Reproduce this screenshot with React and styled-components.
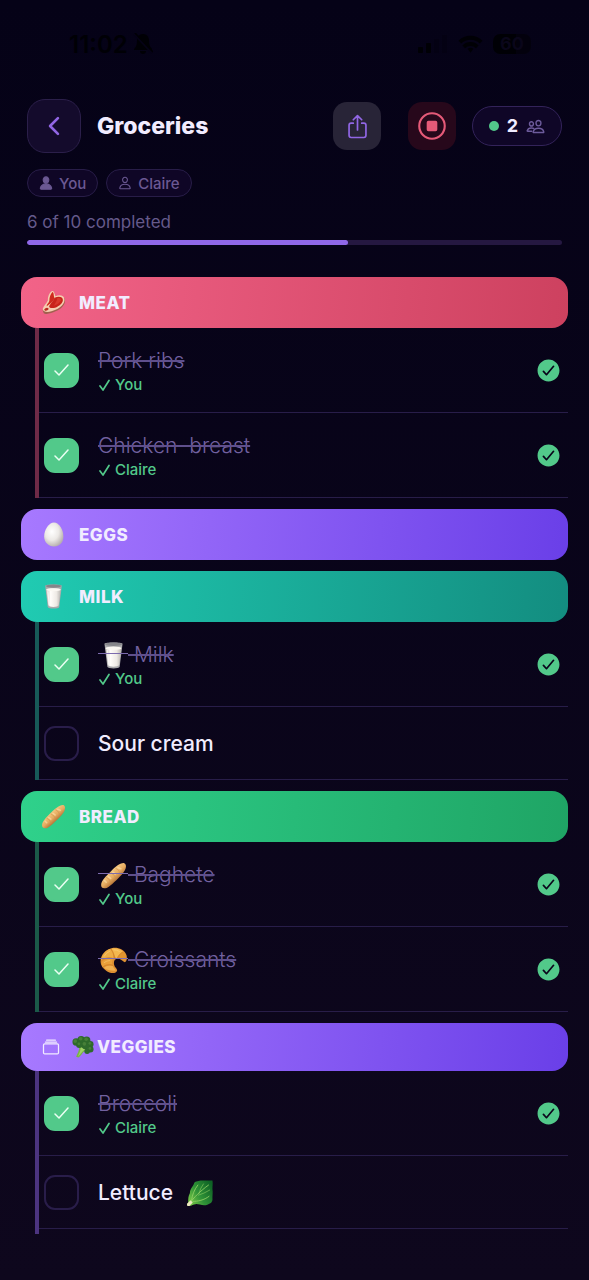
import React, { useId, useState } from "react";
import styled, { createGlobalStyle } from "styled-components";
import {
  IoAlbumsOutline,
  IoCheckmarkCircle,
  IoChevronBack,
  IoPeopleOutline,
  IoPerson,
  IoPersonOutline,
  IoShareOutline,
  IoStopCircleOutline,
} from "react-icons/io5";

const GlobalStyle = createGlobalStyle`
  *, *::before, *::after { box-sizing: border-box; }
  html { background: #0d071c; }
  body {
    margin: 0;
    min-height: 100vh;
    background: linear-gradient(#050217, #0e071d);
    color: #f1ecff;
    font-family: Inter, "Noto Sans", "DejaVu Sans", sans-serif;
  }
`;

/* ---------- emoji drawings ---------- */

function Meat() {
  return (
    <svg viewBox="0 0 48 48" role="img" aria-label="meat">
      <path d="M3 38C4 32 10 28 13 21C14 13 16 6 21 3C26 2 26 8 28 13C35 9 46 11 46 20C47 28 38 37 28 41C20 45 9 48 5 44Z" fill="#a2604f" />
      <path d="M3 37C4 31 10 27 13 20C13 12 16 5 21 2C26 1 26 8 28 12C35 8 45 10 45 18C46 26 37 34 28 38C19 42 6 45 3 37Z" fill="#f6cdb0" />
      <path d="M16 21C16 13 19 7 22 4C25 4 24 12 26 16C24 21 20 25 11 31C10 28 15 25 16 21Z" fill="#cf2a1e" />
      <path d="M26 15C34 11 42 13 42 19C42 25 35 31 27 34C20 36 14 34 16 30C19 25 24 21 26 15Z" fill="#c9241b" />
      <path d="M31 16C36 14 39 17 38 20C36 25 30 28 25 30C27 25 31 22 31 16Z" fill="#d8382c" />
      <path d="M6 38C8 34 12 33 14 35C16 37 12 40 8 40Z" fill="#b92a22" />
    </svg>
  );
}

function Egg() {
  return (
    <svg viewBox="0 0 48 48" role="img" aria-label="egg">
      <defs>
        <radialGradient id="egg" cx="0.4" cy="0.38" r="0.65">
          <stop offset="0" stopColor="#ffffff" />
          <stop offset="0.55" stopColor="#ece9e6" />
          <stop offset="1" stopColor="#b7b0af" />
        </radialGradient>
      </defs>
      <path d="M25 1C35 1 43 15 43 28C43 39 36 47 25 47C14 47 6 39 6 28C6 15 15 1 25 1Z" fill="url(#egg)" />
    </svg>
  );
}

function Milk() {
  return (
    <svg viewBox="0 0 48 48" role="img" aria-label="glass of milk">
      <defs>
        <linearGradient id="milk">
          <stop offset="0" stopColor="#c9c4bf" />
          <stop offset="0.3" stopColor="#fffdfa" />
          <stop offset="0.7" stopColor="#eeeae5" />
          <stop offset="1" stopColor="#b9b4b0" />
        </linearGradient>
      </defs>
      <path d="M8 3C8 0 40 0 40 3L35 44C34 48 14 48 13 44Z" fill="#a9a9ab" />
      <path d="M10 11C15 8 33 8 38 11L34 41C33 45 15 45 14 41Z" fill="url(#milk)" />
      <ellipse cx="24" cy="4" rx="15" ry="3" fill="#85858a" />
      <ellipse cx="24" cy="11" rx="14" ry="3" fill="#faf7f2" />
      <path d="M13 14L16 40" stroke="#fff" strokeWidth="2" opacity="0.7" />
    </svg>
  );
}

function Baguette() {
  return (
    <svg viewBox="0 0 48 48" role="img" aria-label="baguette">
      <defs>
        <linearGradient id="crust" x1="0.3" y1="0.3" x2="0.7" y2="0.75">
          <stop offset="0" stopColor="#f9cf88" />
          <stop offset="0.5" stopColor="#e6ab60" />
          <stop offset="1" stopColor="#9c5722" />
        </linearGradient>
      </defs>
      <path d="M2 41C2 33 12 24 20 16C27 9 36 1 43 2C49 5 46 15 39 22C31 30 20 42 12 46C6 48 2 46 2 41Z" fill="url(#crust)" />
      <g stroke="#cd8f4a" strokeWidth="1" strokeLinecap="round" fill="none">
        <path d="M11 27Q17 29 19 36" />
        <path d="M19 19Q25 21 28 28" />
        <path d="M28 11Q34 13 36 20" />
      </g>
      <g stroke="#fde3b0" strokeWidth="3" strokeLinecap="round" fill="none" opacity="0.6">
        <path d="M8 33L11 36" />
        <path d="M15 26L19 29" />
        <path d="M23 18L27 21" />
        <path d="M32 10L37 12" />
      </g>
    </svg>
  );
}

function Croissant() {
  return (
    <svg viewBox="0 0 48 48" role="img" aria-label="croissant">
      <path d="M1 26C1 14 9 4 21 2C31 0 43 4 47 14C49 21 47 26 44 27C40 26 38 21 32 21C26 21 24 25 25 31C26 37 32 39 30 43C27 48 17 47 11 42C5 38 1 32 1 26Z" fill="#dd9032" />
      <path d="M2 24C3 14 10 6 18 3C22 8 24 14 24 20C18 18 8 18 2 24Z" fill="#efae45" />
      <path d="M20 3C29 1 37 4 41 8C36 11 32 15 30 20C26 20 26 12 20 3Z" fill="#f4b84f" />
      <path d="M42 8C46 13 47 20 44 25C41 23 38 20 33 19C35 14 38 11 42 8Z" fill="#e0942f" />
      <path d="M3 27C9 21 17 20 23 22C21 25 21 28 22 31C16 29 9 31 5 35C3 32 3 30 3 27Z" fill="#e9a03a" />
      <path d="M7 37C12 33 18 32 23 34C24 37 27 39 28 42C22 43 13 42 7 37Z" fill="#efb050" />
      <g stroke="#ffdf93" strokeWidth="1.5" fill="none" opacity="0.5">
        <path d="M7 17Q11 10 18 7" />
        <path d="M24 5Q30 5 35 8" />
        <path d="M7 28Q12 24 18 24" />
      </g>
      <g stroke="#cd7f27" strokeWidth="1" fill="none">
        <path d="M2 25C9 18 18 18 24 21" />
        <path d="M19 3C25 10 25 15 26 20" />
        <path d="M42 8C36 11 33 15 31 20" />
        <path d="M5 36C10 31 17 31 23 33" />
      </g>
    </svg>
  );
}

function Broccoli() {
  return (
    <svg viewBox="0 0 48 48" role="img" aria-label="broccoli">
      <path d="M16 23L25 21L37 31C31 31 27 32 24 36C21 40 18 45 14 47L9 45C12 38 16 32 16 23Z" fill="#78b544" />
      <path d="M19 24L30 29C24 31 20 38 13 45C17 36 19 31 19 24Z" fill="#a3d167" />
      <g fill="#2e6a2b">
        <circle cx="9" cy="13" r="8" />
        <circle cx="20" cy="8" r="8" />
        <circle cx="32" cy="9" r="8" />
        <circle cx="40" cy="18" r="7" />
        <circle cx="40" cy="29" r="7" />
        <circle cx="29" cy="20" r="9" />
        <circle cx="16" cy="19" r="7" />
        <circle cx="33" cy="33" r="6" />
      </g>
      <g fill="#467f38">
        <circle cx="7" cy="11" r="4" />
        <circle cx="19" cy="6" r="4" />
        <circle cx="31" cy="7" r="4" />
        <circle cx="39" cy="16" r="3" />
        <circle cx="27" cy="17" r="4" />
        <circle cx="15" cy="17" r="3" />
        <circle cx="39" cy="27" r="3" />
      </g>
    </svg>
  );
}

function Lettuce() {
  return (
    <svg viewBox="0 0 48 48" role="img" aria-label="leafy green">
      <defs>
        <linearGradient id="leaf" x1="0" y1="0.8" x2="1" y2="0.2">
          <stop offset="0" stopColor="#7ccb48" />
          <stop offset="0.45" stopColor="#2f9237" />
          <stop offset="1" stopColor="#0e6225" />
        </linearGradient>
      </defs>
      <path d="M4 40C4 33 4 28 7 23C7 16 12 12 14 7C15 2 21 3 26 1L47 1C48 7 47 10 47 16C48 23 47 26 47 32C48 40 43 42 38 44C30 47 22 42 17 43C13 43 10 46 6 46C1 47 1 42 4 40Z" fill="url(#leaf)" />
      <g stroke="#94d166" strokeWidth="1.5" strokeLinecap="round" fill="none">
        <path d="M6 42C14 31 25 20 40 9" />
        <path d="M10 36C11 26 15 17 21 9" />
        <path d="M12 38C21 38 32 36 41 29" />
        <path d="M23 24Q25 15 31 7" strokeWidth="1" />
        <path d="M22 27Q32 24 42 18" strokeWidth="1" />
      </g>
      <path d="M2 42L8 36L12 40L6 46C3 47 1 45 2 42Z" fill="#f0e9c3" />
    </svg>
  );
}

const EMOJI = {
  meat: Meat,
  egg: Egg,
  milk: Milk,
  baguette: Baguette,
  croissant: Croissant,
  broccoli: Broccoli,
  lettuce: Lettuce,
};

/* ---------- status bar ---------- */

const StatusBar = styled.div`
  display: flex;
  justify-content: space-between;
  align-items: center;
  height: 40px;
  margin-top: 24px;
  padding: 0 58px 0 69px;
  color: #000005;
`;

const Clock = styled.span`
  display: flex;
  align-items: center;
  gap: 5px;
  font-size: 24px;
  font-weight: 600;
`;

const StatusIcons = styled.span`
  display: flex;
  align-items: center;
  gap: 10px;
`;

const Battery = styled.span`
  width: 38px;
  height: 20px;
  border-radius: 7px;
  background: linear-gradient(90deg, #000005 60%, #03010d 60%);
  color: #0a061a;
  font-size: 18px;
  font-weight: 700;
  line-height: 20px;
  text-align: center;
`;

function BellOff() {
  return (
    <svg width="20" height="22" viewBox="0 0 20 22" fill="currentColor" aria-hidden="true">
      <path d="M10 1C14 1 16 4 16 8C16 12 17 14 19 16V17H1V16C3 14 4 12 4 8C4 4 6 1 10 1Z" />
      <path d="M7 18H13C13 22 7 22 7 18Z" />
      <path d="M1 1L19 20" stroke="#050216" strokeWidth="2" />
      <path d="M2 0L20 19" stroke="currentColor" strokeWidth="1.5" />
    </svg>
  );
}

function Signal() {
  return (
    <svg width="30" height="20" viewBox="0 0 30 20" fill="currentColor" aria-hidden="true">
      <rect x="0" y="13" width="5" height="6" rx="1" />
      <rect x="8" y="9" width="5" height="10" rx="1" />
      <rect x="16" y="5" width="5" height="14" rx="1" opacity="0.2" />
      <rect x="24" y="1" width="5" height="18" rx="1" opacity="0.2" />
    </svg>
  );
}

function Wifi() {
  return (
    <svg width="25" height="19" viewBox="0 0 26 19" fill="none" stroke="currentColor" strokeWidth="4" aria-hidden="true">
      <path d="M2 7C8 1 18 1 24 7" />
      <path d="M6 12C10 8 16 8 20 12" />
      <path d="M10 14Q13 12 16 14L13 18Z" fill="currentColor" stroke="none" />
    </svg>
  );
}

/* ---------- header ---------- */

const Header = styled.header`
  padding: 35px 27px 0;
`;

const TitleBar = styled.div`
  display: flex;
  align-items: center;
`;

const BackButton = styled.button`
  display: grid;
  place-items: center;
  width: 54px;
  height: 54px;
  padding: 0;
  border: 1px solid #2b1f4a;
  border-radius: 18px;
  background: #140b2c;
  color: #9166e4;
`;

const Title = styled.h1`
  flex: 1;
  margin: 0 0 0 16px;
  font-size: 23px;
  font-weight: 800;
  line-height: 32px;
`;

const ToolButton = styled.button`
  display: grid;
  place-items: center;
  width: 48px;
  height: 48px;
  margin-right: ${({ $danger }) => ($danger ? 16 : 27)}px;
  padding: 0;
  border: 0;
  border-radius: 14px;
  background: ${({ $danger }) => ($danger ? "#27081b" : "#282437")};
  color: ${({ $danger }) => ($danger ? "#e55a78" : "#9166e4")};
`;

const MembersButton = styled.button`
  display: flex;
  align-items: center;
  justify-content: center;
  gap: 8px;
  width: 90px;
  height: 40px;
  padding: 0;
  border: 1px solid #33235a;
  border-radius: 20px;
  background: #0f0627;
  color: #f1ecff;
  font: 700 18px/24px Inter, "Noto Sans", sans-serif;

  svg { color: #6d5b9c; }
  path { stroke-width: 38px; }
`;

const OnlineDot = styled.span`
  width: 10px;
  height: 10px;
  border-radius: 50%;
  background: #52c98a;
`;

const Chips = styled.ul`
  display: flex;
  gap: 8px;
  margin: 16px 0 0;
  padding: 0;
  list-style: none;
`;

const Chip = styled.li`
  display: flex;
  align-items: center;
  gap: 6px;
  height: 28px;
  padding: 0 11px;
  border: 1px solid #281d48;
  border-radius: 14px;
  background: #0f0626;
  color: #6b5993;
  font-size: 15px;
  font-weight: 500;

  path { stroke-width: 38px; }
`;

const ProgressLabel = styled.label`
  display: block;
  margin-top: 13px;
  color: #655a8b;
  font-size: 17px;
  line-height: 24px;
`;

const ProgressBar = styled.progress`
  display: block;
  appearance: none;
  width: 100%;
  height: 5px;
  margin-top: 6px;
  border: 0;
  border-radius: 3px;
  overflow: hidden;
  background: #251841;

  &::-webkit-progress-bar { background: #251841; }
  &::-webkit-progress-value { border-radius: 3px; background: #9068e8; }
  &::-moz-progress-bar { border-radius: 3px; background: #9068e8; }
`;

/* ---------- list ---------- */

const List = styled.main`
  display: flex;
  flex-direction: column;
  gap: 11px;
  padding: 32px 21px 46px;
`;

const GroupHeader = styled.h2`
  display: flex;
  align-items: center;
  height: ${({ $compact }) => ($compact ? 48 : 51)}px;
  margin: 0;
  padding: 0 20px;
  border-radius: 16px;
  background: linear-gradient(95deg, ${({ $from }) => $from}, ${({ $to }) => $to});
  font-size: 17px;
  font-weight: 800;
  line-height: 24px;
  letter-spacing: 0.5px;
`;

const GroupEmoji = styled.span`
  display: grid;
  width: ${({ $inline }) => ($inline ? 22 : 25)}px;
  margin-left: ${({ $inline }) => ($inline ? 11 : 0)}px;
  margin-right: ${({ $inline }) => ($inline ? 3 : 13)}px;
`;

const GroupBody = styled.ul`
  margin: 0 0 0 14px;
  padding: 0 0 ${({ $last }) => ($last ? 5 : 0)}px;
  border-left: 4px solid ${({ $color }) => $color};
  list-style: none;
`;

const Row = styled.li`
  display: flex;
  align-items: center;
  min-height: ${({ $done }) => ($done ? 85 : 73)}px;
  padding: 0 6px 0 5px;
  border-bottom: 1px solid #281d49;
`;

const CheckBox = styled.span`
  display: grid;
  place-items: center;
  flex: none;
  margin-right: 19px;

  > * { grid-area: 1 / 1; }
  svg { pointer-events: none; }
`;

const CheckInput = styled.input`
  appearance: none;
  width: 35px;
  height: 35px;
  margin: 0;
  border: 2px solid #291d4a;
  border-radius: 11px;
  background: transparent;

  &:checked { border-color: #52c98a; background: #52c98a; }
`;

const ItemText = styled.div`
  flex: 1;
  min-width: 0;
`;

const ItemLabel = styled.label`
  display: flex;
  align-items: center;
  padding-top: 2px;
  color: ${({ $done }) => ($done ? "#7261a0" : "#f1ecff")};
  font-size: 21px;
  font-weight: ${({ $done }) => ($done ? 300 : 500)};
  line-height: 28px;
  white-space: pre;
`;

const ItemName = styled.span`
  text-decoration: ${({ $done }) => ($done ? "line-through" : "none")};
  text-decoration-color: #5f4f8c;
  text-decoration-thickness: 2px;
`;

const ItemEmoji = styled.span`
  position: relative;
  display: grid;
  justify-items: center;
  width: 30px;

  svg { width: 27px; height: 27px; }

  &::after {
    content: "";
    display: ${({ $done }) => ($done ? "block" : "none")};
    position: absolute;
    top: 11px;
    left: 0;
    right: 0;
    height: 1px;
    background: #7c6bae;
  }
`;

const DoneBy = styled.div`
  display: flex;
  align-items: center;
  gap: 5px;
  padding-left: 1px;
  color: #52c98a;
  font-size: 15px;
  font-weight: 500;
  line-height: 20px;
`;

const DoneMark = styled(IoCheckmarkCircle)`
  flex: none;
  color: #52c98a;
`;

const GROUPS = [
  {
    name: "MEAT", emoji: "meat", from: "#f26388", to: "#cd415f", line: "#6f2a47",
    items: [
      { name: "Pork ribs", by: "You" },
      { name: "Chicken  breast", by: "Claire" },
    ],
  },
  { name: "EGGS", emoji: "egg", from: "#a779ff", to: "#6a3fe8", line: "#4c3480", items: [] },
  {
    name: "MILK", emoji: "milk", from: "#20cbb2", to: "#138d80", line: "#175a58",
    items: [
      { name: " Milk", emoji: "milk", by: "You" },
      { name: "Sour cream" },
    ],
  },
  {
    name: "BREAD", emoji: "baguette", from: "#2fd18b", to: "#1fa565", line: "#1b5a49",
    items: [
      { name: " Baghete", emoji: "baguette", by: "You" },
      { name: " Croissants", emoji: "croissant", by: "Claire" },
    ],
  },
  {
    name: "VEGGIES", emoji: "broccoli", custom: true, from: "#a779ff", to: "#6a3fe8", line: "#4c3480",
    items: [
      { name: "Broccoli", by: "Claire" },
      { name: "Lettuce  ", emoji: "lettuce", emojiLast: true },
    ],
  },
];

function Item({ item }) {
  const id = useId();
  const done = Boolean(item.by);
  const [checked, setChecked] = useState(done);
  const Drawing = item.emoji && EMOJI[item.emoji];
  const emoji = Drawing && (
    <ItemEmoji $done={done}>
      <Drawing />
    </ItemEmoji>
  );
  return (
    <Row $done={done}>
      <CheckBox>
        <CheckInput id={id} type="checkbox" checked={checked} onChange={() => setChecked(!checked)} />
        {checked && (
          <svg width="15" height="13" viewBox="0 0 15 13" fill="none" stroke="#eafff3" strokeWidth="1.5" strokeLinecap="round" strokeLinejoin="round" aria-hidden="true">
            <path d="M1 7L5 11L14 1" />
          </svg>
        )}
      </CheckBox>
      <ItemText>
        <ItemLabel htmlFor={id} $done={done}>
          {!item.emojiLast && emoji}
          <ItemName $done={done}>{item.name}</ItemName>
          {item.emojiLast && emoji}
        </ItemLabel>
        {done && (
          <DoneBy>
            <svg width="11" height="12" viewBox="0 0 11 12" fill="none" stroke="currentColor" strokeWidth="1.7" strokeLinecap="round" strokeLinejoin="round" aria-hidden="true">
              <path d="M1 7L4 11L10 1.5" />
            </svg>
            {item.by}
          </DoneBy>
        )}
      </ItemText>
      {done && <DoneMark size={27} aria-hidden="true" />}
    </Row>
  );
}

function Group({ group, last }) {
  const Drawing = EMOJI[group.emoji];
  return (
    <section>
      <GroupHeader $compact={group.custom} $from={group.from} $to={group.to}>
        {group.custom && <IoAlbumsOutline size={20} aria-hidden="true" />}
        <GroupEmoji $inline={group.custom}>
          <Drawing />
        </GroupEmoji>
        {group.name}
      </GroupHeader>
      {group.items.length > 0 && (
        <GroupBody $color={group.line} $last={last}>
          {group.items.map((item) => (
            <Item key={item.name} item={item} />
          ))}
        </GroupBody>
      )}
    </section>
  );
}

export default function App() {
  return (
    <>
      <GlobalStyle />
      <StatusBar>
        <Clock>
          11:02
          <BellOff />
        </Clock>
        <StatusIcons>
          <Signal />
          <Wifi />
          <Battery>60</Battery>
        </StatusIcons>
      </StatusBar>
      <Header>
        <TitleBar>
          <BackButton type="button" aria-label="Back">
            <IoChevronBack size={28} />
          </BackButton>
          <Title>Groceries</Title>
          <ToolButton type="button" aria-label="Share">
            <IoShareOutline size={27} />
          </ToolButton>
          <ToolButton type="button" aria-label="Stop" $danger>
            <IoStopCircleOutline size={34} />
          </ToolButton>
          <MembersButton type="button" aria-label="2 members">
            <OnlineDot />
            2
            <IoPeopleOutline size={19} />
          </MembersButton>
        </TitleBar>
        <Chips>
          <Chip>
            <IoPerson size={14} aria-hidden="true" />
            You
          </Chip>
          <Chip>
            <IoPersonOutline size={14} aria-hidden="true" />
            Claire
          </Chip>
        </Chips>
        <ProgressLabel htmlFor="progress">6 of 10 completed</ProgressLabel>
        <ProgressBar id="progress" value={6} max={10} />
      </Header>
      <List>
        {GROUPS.map((group, index) => (
          <Group key={group.name} group={group} last={index === GROUPS.length - 1} />
        ))}
      </List>
    </>
  );
}
